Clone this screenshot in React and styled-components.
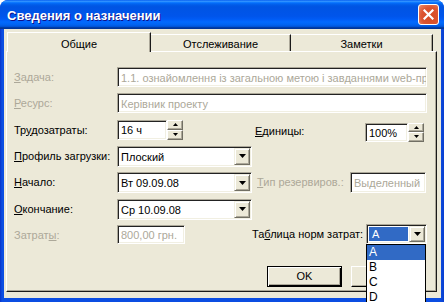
import React from 'react'
import styled, { createGlobalStyle } from 'styled-components'

const Global = createGlobalStyle`
  html, body { margin: 0; padding: 0; background: #fff; overflow: hidden; }
  body { font-family: "Liberation Sans", Arial, sans-serif; font-size: 11px; color: #000; }
`

const Window = styled.div`
  width: 444px;
  height: 302px;
  display: flex;
  flex-direction: column;
  background: linear-gradient(90deg, #0832c8 0px, #0c4ee2 2px, #0c4ee2 440px, #0a3fcf 444px);
  border-radius: 8px 8px 0 0;
  overflow: hidden;
`
const TitleBar = styled.div`
  height: 29px;
  flex: none;
  display: flex;
  align-items: center;
  justify-content: space-between;
  padding: 0 5px 0 7px;
  background: linear-gradient(180deg, #0058ee 0%, #3593ff 4%, #288eff 6%, #127dff 8%, #036ffc 10%, #0262ee 14%, #0057e5 20%, #0054e3 24%, #0055eb 56%, #005bf5 66%, #026afe 76%, #0062ef 86%, #0052d6 92%, #0040ab 94%, #003092 100%);
`
const Title = styled.span`
  color: #fff;
  font: bold 13px "Liberation Sans", Arial, sans-serif;
  text-shadow: 1px 1px #0f1089;
  padding-top: 1px;
`
const CloseBtn = styled.div`
  width: 21px;
  height: 21px;
  box-sizing: border-box;
  border: 1px solid #fff;
  border-radius: 3px;
  background: radial-gradient(circle at 60% 60%, #d44a22 0%, #dc5430 55%, #e87a58 85%, #f3a98c 100%);
  display: flex;
  align-items: center;
  justify-content: center;
`
const Client = styled.div`
  flex: 1;
  display: flex;
  flex-direction: column;
  background: #ece9d8;
  margin: 0 3px 4px 4px;
  padding: 3px 4px 6px 2px;
  position: relative;
`
const Tabs = styled.div`
  display: flex;
  align-items: flex-end;
  height: 19px;
  margin-left: 1px;
  position: relative;
  z-index: 2;
`
const Tab = styled.div`
  width: ${p => p.$w}px;
  height: ${p => (p.$active ? 20 : 17)}px;
  margin-bottom: ${p => (p.$active ? -1 : 0)}px;
  box-sizing: border-box;
  background: #ece9d8;
  border-top: 1px solid #fff;
  border-left: ${p => (p.$first ? '1px solid #fff' : 'none')};
  border-right: 1px solid #1a1a1a;
  box-shadow: inset -1px 0 #aca899;
  display: flex;
  align-items: center;
  justify-content: center;
  padding-top: 2px;
`
const Panel = styled.div`
  flex: 1;
  box-sizing: border-box;
  border-top: 1px solid #fff;
  border-left: 1px solid #fff;
  border-right: 1px solid #1a1a1a;
  border-bottom: 1px solid #1a1a1a;
  box-shadow: inset -1px -1px #aca899;
  padding: 15px 0 0 7px;
  display: flex;
  flex-direction: column;
`
const Rows = styled.div`
  display: flex;
  flex-direction: column;
  gap: 5.33px;
  position: relative;
  z-index: 3;
`
const Row = styled.div`
  display: flex;
  align-items: flex-start;
  height: 21px;
`
const Label = styled.div`
  width: ${p => p.$w}px;
  margin-left: ${p => p.$ml || 0}px;
  margin-top: ${p => p.$mt || 0}px;
  flex: none;
  height: 20px;
  line-height: 20px;
  white-space: nowrap;
  color: ${p => (p.$disabled ? '#aca899' : '#000')};
`
const Field = styled.div`
  width: ${p => p.$w}px;
  height: ${p => p.$h || 20}px;
  margin-top: ${p => p.$mt || 0}px;
  flex: none;
  box-sizing: border-box;
  background: #fff;
  border: 1px solid;
  border-color: #aca899 #fff #fff #aca899;
  box-shadow: inset 1px 1px #222, inset -1px -1px #f1efe2;
  padding-left: 3px;
  display: flex;
  align-items: center;
  white-space: nowrap;
  overflow: hidden;
  color: ${p => (p.$disabled ? '#aca899' : '#000')};
`
const Value = styled.span`
  flex: 1;
  overflow: hidden;
  padding-top: 1px;
`
const Highlight = styled.span`
  flex: 1;
  align-self: stretch;
  margin: 2px 1px 2px -1px;
  background: #316ac5;
  color: #fff;
  display: flex;
  align-items: center;
  padding-left: 3px;
`
const DropBtn = styled.div`
  width: 16px;
  align-self: stretch;
  margin: 1px 1px 1px 0;
  box-sizing: border-box;
  background: #ece9d8;
  border: 1px solid;
  border-color: #f1efe2 #716f64 #716f64 #f1efe2;
  box-shadow: inset 1px 1px #fff, inset -1px -1px #aca899;
  display: flex;
  align-items: center;
  justify-content: center;
  flex: none;
`
const ComboWrap = styled.div`
  position: relative;
  flex: none;
  margin-top: ${p => p.$mt || 0}px;
`
const Spin = styled.div`
  width: 16px;
  height: ${p => p.$h || 20}px;
  margin-top: ${p => p.$mt || 0}px;
  display: flex;
  flex-direction: column;
  flex: none;
`
const SpinBtn = styled.div`
  flex: 1;
  box-sizing: border-box;
  background: #ece9d8;
  border: 1px solid;
  border-color: #fff #716f64 #716f64 #fff;
  box-shadow: inset -1px -1px #aca899;
  display: flex;
  align-items: center;
  justify-content: center;
`
const List = styled.div`
  position: absolute;
  left: 0;
  top: 100%;
  width: 60px;
  box-sizing: border-box;
  background: #fff;
  border: 1px solid #000;
  z-index: 5;
`
const Item = styled.div`
  height: 15px;
  line-height: 15px;
  padding-left: 2px;
  font-size: 12px;
  background: ${p => (p.$sel ? '#316ac5' : '#fff')};
  color: ${p => (p.$sel ? '#fff' : '#000')};
`
const Buttons = styled.div`
  display: flex;
  gap: 9px;
  margin: 20px 0 0 253px;
`
const Button = styled.div`
  width: 75px;
  height: 21px;
  box-sizing: border-box;
  background: #ece9d8;
  border: 1px solid;
  border-color: ${p => (p.$default ? '#000' : '#fff #000 #000 #fff')};
  box-shadow: ${p => (p.$default
    ? 'inset 1px 1px #fff, inset -1px -1px #000, inset -2px -2px #aca899'
    : 'inset -1px -1px #aca899')};
  display: flex;
  align-items: center;
  justify-content: center;
`

const Down = ({ w = 7, h = 4 }) => (
  <svg width={w} height={h} viewBox={`0 0 ${w} ${h}`}>
    <polygon points={`0,0 ${w},0 ${w / 2},${h}`} fill="#000" />
  </svg>
)
const Up = ({ w = 5, h = 3 }) => (
  <svg width={w} height={h} viewBox={`0 0 ${w} ${h}`}>
    <polygon points={`0,${h} ${w},${h} ${w / 2},0`} fill="#000" />
  </svg>
)

const Combo = ({ w, children, open }) => (
  <ComboWrap $mt={open ? -1 : 0}>
    <Field $w={w} $h={open ? 20 : 21}>
      {children}
      <DropBtn><Down /></DropBtn>
    </Field>
    {open && (
      <List>
        {['A', 'B', 'C', 'D', 'E'].map((k, i) => (
          <Item key={k} $sel={i === 0}>{k}</Item>
        ))}
      </List>
    )}
  </ComboWrap>
)

const Spinner = ({ h, mt }) => (
  <Spin $h={h} $mt={mt}>
    <SpinBtn><Up /></SpinBtn>
    <SpinBtn><Down w={5} h={3} /></SpinBtn>
  </Spin>
)

export default function App() {
  return (
    <>
      <Global />
      <Window>
        <TitleBar>
          <Title>Сведения о назначении</Title>
          <CloseBtn>
            <svg width="11" height="11" viewBox="0 0 11 11">
              <path d="M1.5 1.5 L9.5 9.5 M9.5 1.5 L1.5 9.5" stroke="#fff" strokeWidth="2.2" strokeLinecap="square" />
            </svg>
          </CloseBtn>
        </TitleBar>
        <Client>
          <Tabs>
            <Tab $w={144} $active $first>Общие</Tab>
            <Tab $w={140}>Отслеживание</Tab>
            <Tab $w={142}>Заметки</Tab>
          </Tabs>
          <Panel>
            <Rows>
              <Row>
                <Label $w={103} $disabled><u>З</u>адача:</Label>
                <Field $w={310} $disabled>
                  <Value>1.1. ознайомлення із загальною метою і завданнями web-проекту</Value>
                </Field>
              </Row>
              <Row>
                <Label $w={103} $disabled><u>Р</u>есурс:</Label>
                <Field $w={310} $disabled><Value>Керівник проекту</Value></Field>
              </Row>
              <Row>
                <Label $w={103}>Тр<u>у</u>дозатраты:</Label>
                <Field $w={50}><Value>16 ч</Value></Field>
                <Spinner h={20} />
                <Label $w={110} $ml={72} $mt={1}><u>Е</u>диницы:</Label>
                <Field $w={43} $mt={3} $h={19}><Value>100%</Value></Field>
                <Spinner h={19} mt={3} />
              </Row>
              <Row>
                <Label $w={103}><u>П</u>рофиль загрузки:</Label>
                <Combo w={135}><Value>Плоский</Value></Combo>
              </Row>
              <Row>
                <Label $w={103}><u>Н</u>ачало:</Label>
                <Combo w={135}><Value>Вт 09.09.08</Value></Combo>
                <Label $w={93} $ml={5} $disabled><u>Т</u>ип резервиров.:</Label>
                <Field $w={76} $h={21} $disabled><Value>Выделенный</Value></Field>
              </Row>
              <Row>
                <Label $w={103}><u>О</u>кончание:</Label>
                <Combo w={135}><Value>Ср 10.09.08</Value></Combo>
              </Row>
              <Row>
                <Label $w={103} $disabled>Затрат<u>ы</u>:</Label>
                <Field $w={68} $h={19} $disabled><Value>800,00 грн.</Value></Field>
                <Label $w={114} $ml={67} $mt={-1}>Та<u>б</u>лица норм затрат:</Label>
                <Combo w={61} open><Highlight>A</Highlight></Combo>
              </Row>
            </Rows>
            <Buttons>
              <Button $default>OK</Button>
              <Button>Отмена</Button>
            </Buttons>
          </Panel>
        </Client>
      </Window>
    </>
  )
}
